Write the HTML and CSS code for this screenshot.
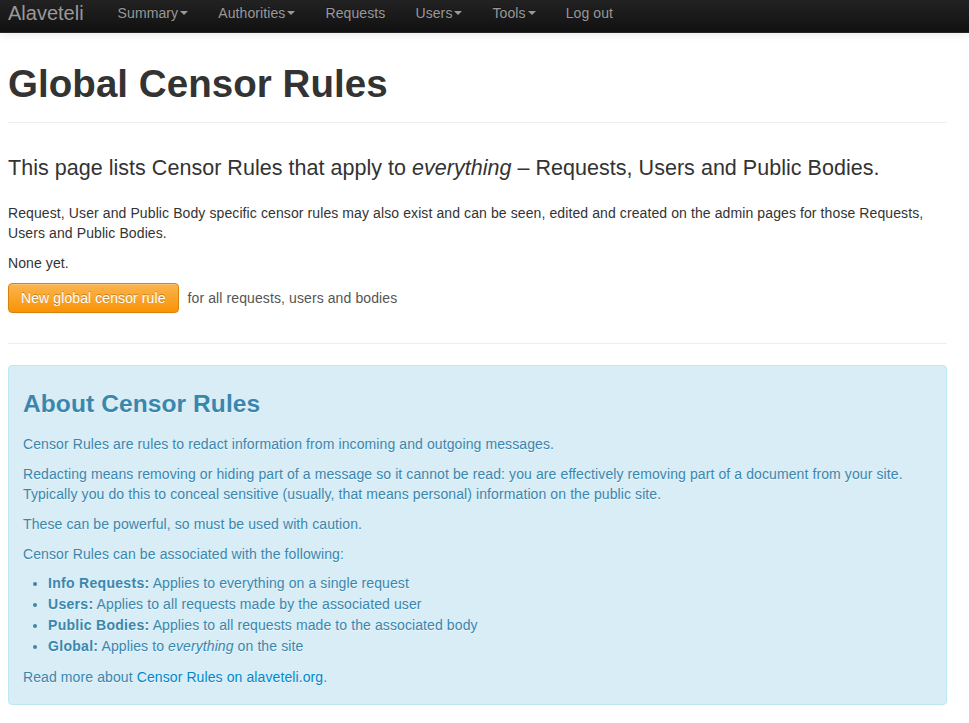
FILE: index.html
```
<!DOCTYPE html>
<html>
<head>
<meta charset="utf-8">
<title>Global Censor Rules</title>
<link rel="stylesheet" href="styles.css">
</head>
<body>
<div class="navbar">
  <a class="brand" href="#">Alaveteli</a>
  <ul class="nav">
    <li><a href="#">Summary<b class="caret"></b></a></li>
    <li><a href="#">Authorities<b class="caret"></b></a></li>
    <li><a href="#">Requests</a></li>
    <li><a href="#">Users<b class="caret"></b></a></li>
    <li><a href="#">Tools<b class="caret"></b></a></li>
    <li><a href="#">Log out</a></li>
  </ul>
</div>
<div class="container">
  <div class="page-header">
    <h1>Global Censor Rules</h1>
  </div>
  <p class="lead">This page lists Censor Rules that apply to <em>everything</em> – Requests, Users and Public Bodies.</p>
  <p>Request, User and Public Body specific censor rules may also exist and can be seen, edited and created on the admin pages for those Requests, Users and Public Bodies.</p>
  <p>None yet.</p>
  <p class="actions"><a class="btn-warning" href="#">New global censor rule</a><span class="muted">for all requests, users and bodies</span></p>
  <hr>
  <div class="alert-info">
    <h3>About Censor Rules</h3>
    <p>Censor Rules are rules to redact information from incoming and outgoing messages.</p>
    <p>Redacting means removing or hiding part of a message so it cannot be read: you are effectively removing part of a document from your site. Typically you do this to conceal sensitive (usually, that means personal) information on the public site.</p>
    <p>These can be powerful, so must be used with caution.</p>
    <p>Censor Rules can be associated with the following:</p>
    <ul>
      <li><strong>Info Requests:</strong> Applies to everything on a single request</li>
      <li><strong>Users:</strong> Applies to all requests made by the associated user</li>
      <li><strong>Public Bodies:</strong> Applies to all requests made to the associated body</li>
      <li><strong>Global:</strong> Applies to <em>everything</em> on the site</li>
    </ul>
    <p class="last">Read more about <a href="#">Censor Rules on alaveteli.org</a>.</p>
  </div>
</div>
</body>
</html>
```
FILE: styles.css
```
html, body {
  margin: 0;
  padding: 0;
}
body {
  font-family: "Liberation Sans", Arial, sans-serif;
  font-size: 14px;
  line-height: 20px;
  color: #333;
  background: #fff;
}
.navbar {
  height: 33px;
  background: linear-gradient(to bottom, #222, #111);
  border-bottom: 1px solid #252525;
  box-shadow: 0 1px 10px rgba(0,0,0,0.1);
  display: flex;
  align-items: flex-start;
  padding-left: 8px;
  box-sizing: border-box;
}
.brand {
  font-size: 20px;
  line-height: 20px;
  color: #999;
  text-decoration: none;
  padding: 3px 19px 0 0;
}
.nav {
  list-style: none;
  margin: 0;
  padding: 0;
  display: flex;
}
.nav a {
  display: block;
  padding: 3px 15px 0;
  line-height: 20px;
  color: #999;
  text-decoration: none;
  letter-spacing: 0.1px;
  text-shadow: 0 -1px 0 rgba(0,0,0,0.25);
}
.caret {
  display: inline-block;
  width: 0;
  height: 0;
  vertical-align: top;
  margin-top: 8px;
  margin-left: 2px;
  border-top: 4px solid #999;
  border-left: 4px solid transparent;
  border-right: 4px solid transparent;
}
.container {
  width: 939px;
  margin-left: 8px;
  letter-spacing: 0.1px;
}
.page-header {
  margin: 31px 0 30px;
  padding-bottom: 8px;
  border-bottom: 1px solid #eee;
}
h1 {
  font-size: 38.5px;
  line-height: 40px;
  font-weight: bold;
  margin: 10px 0;
  letter-spacing: 0.05px;
}
p {
  margin: 0 0 10px;
}
.lead {
  font-size: 21.5px;
  line-height: 30px;
  font-weight: 200;
  margin-bottom: 20px;
  letter-spacing: 0.03px;
}
.actions {
  display: flex;
  align-items: center;
  margin-bottom: 30px;
}
.btn-warning {
  display: inline-block;
  padding: 4px 12px;
  line-height: 20px;
  color: #fff;
  text-decoration: none;
  text-shadow: 0 -1px 0 rgba(0,0,0,0.25);
  background: linear-gradient(to bottom, #fbb450, #f89406);
  border: 1px solid #d7840b;
  border-radius: 4px;
  box-shadow: inset 0 1px 0 rgba(255,255,255,0.2), 0 1px 2px rgba(0,0,0,0.05);
}
.muted {
  color: #555;
  margin-left: 9px;
}
hr {
  margin: 20px 0;
  border: 0;
  border-top: 1px solid #eee;
  border-bottom: 1px solid #fff;
}
.alert-info {
  background: #d9edf7;
  border: 1px solid #bce8f1;
  border-radius: 4px;
  color: #3a87ad;
  padding: 8px 14px;
  text-shadow: 0 1px 0 rgba(255,255,255,0.5);
}
.alert-info h3 {
  font-size: 24.5px;
  line-height: 40px;
  font-weight: bold;
  margin: 10px 0;
}
.alert-info ul {
  margin: -1px 0 10px 25px;
  padding: 0;
}
.alert-info li {
  line-height: 21px;
}
.alert-info strong {
  letter-spacing: 0.3px;
}
.alert-info .last {
  margin-bottom: 9px;
}
.alert-info a {
  color: #0088cc;
  text-decoration: none;
}
```
